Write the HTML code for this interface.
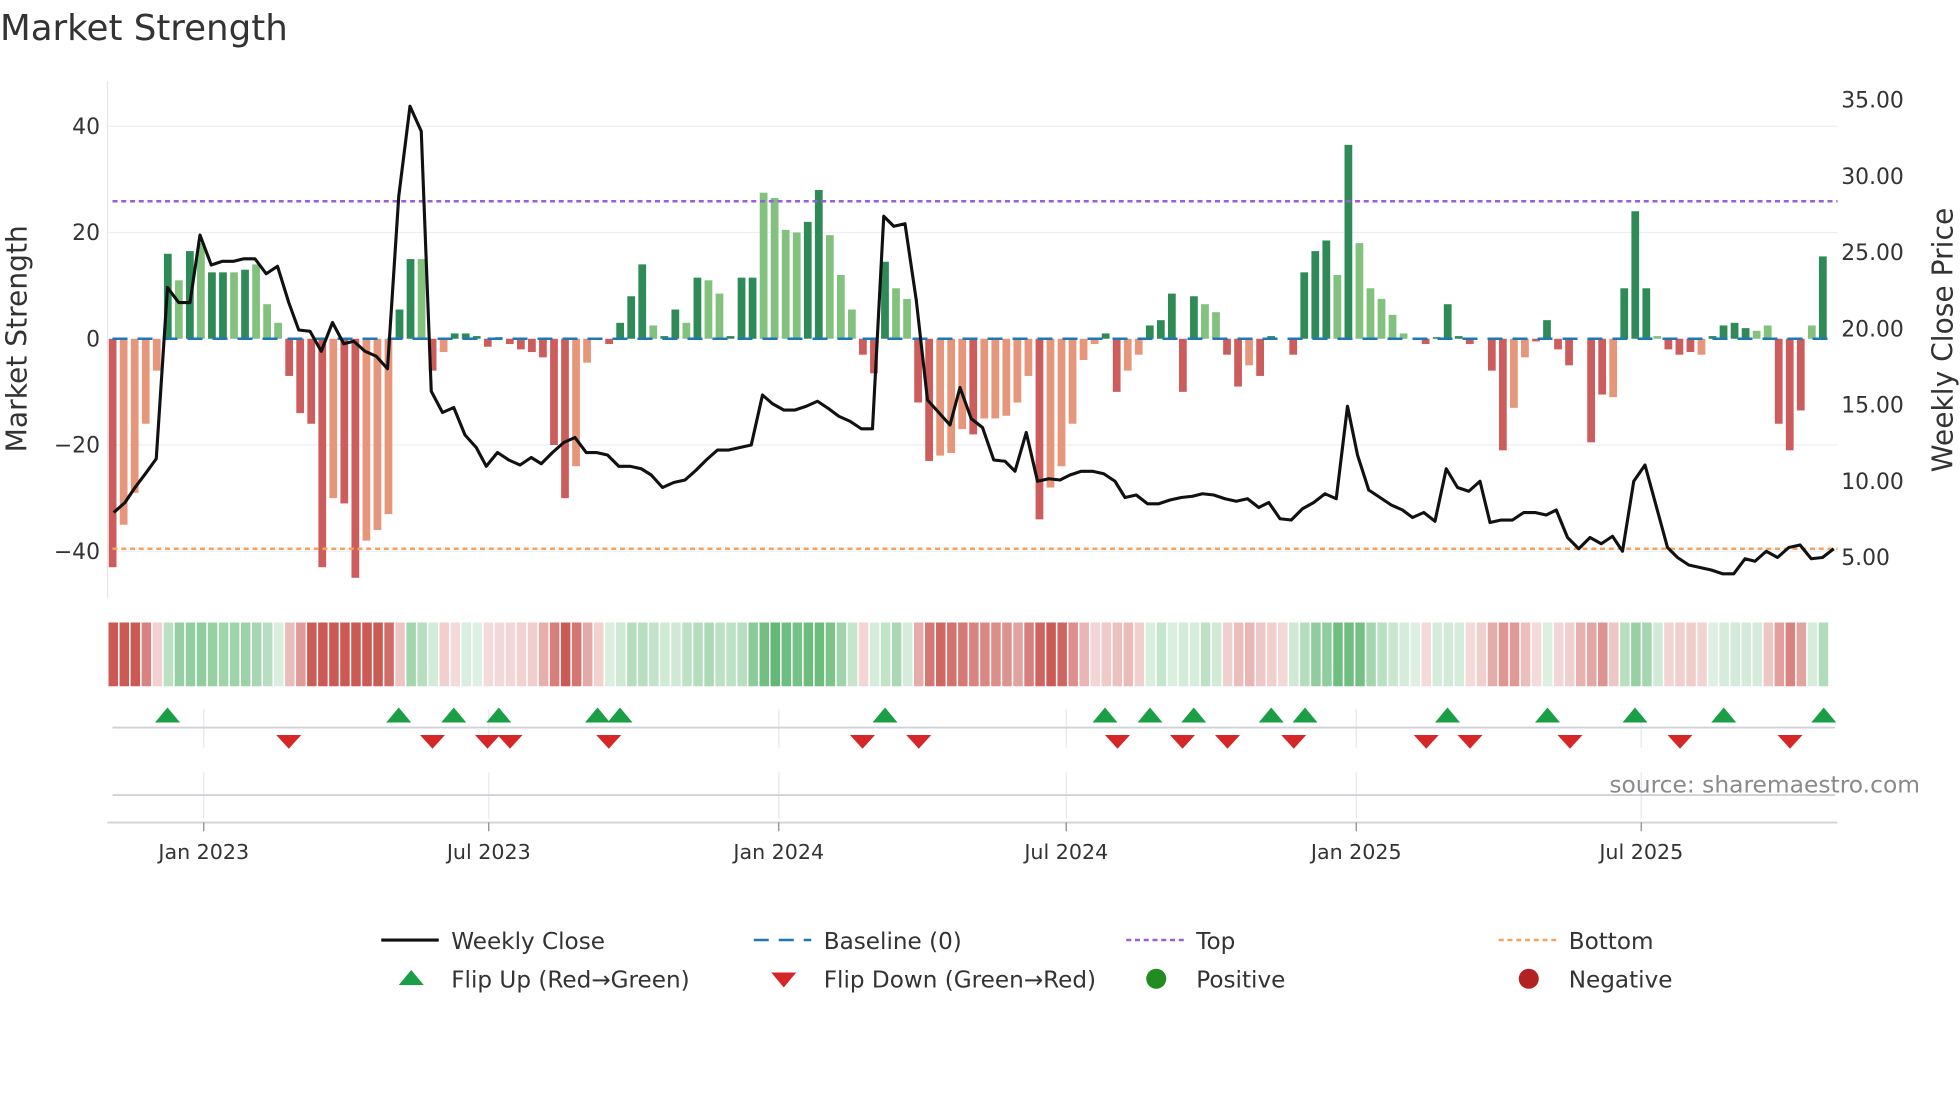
<!DOCTYPE html>
<html><head><meta charset="utf-8"><style>
html,body{margin:0;padding:0;background:#fff;}
svg{display:block;font-family:"DejaVu Sans","Liberation Sans",sans-serif;}
</style></head><body>
<svg id="s" width="1960" height="1102" viewBox="0 0 1568 881.6" xmlns="http://www.w3.org/2000/svg">
<rect width="1568" height="882" fill="#fff"/>
<text x="0" y="32" font-size="28.5" fill="#333">Market Strength</text>
<g id="grid" stroke="#eceff3" stroke-width="1">
<line x1="86" x2="1470" y1="101" y2="101"/><line x1="86" x2="1470" y1="186" y2="186"/>
<line x1="86" x2="1470" y1="356" y2="356"/><line x1="86" x2="1470" y1="441" y2="441"/>
</g>
<line x1="86" x2="86" y1="65" y2="478" stroke="#e3e6ea"/>
<g id="bars"></g>
<line x1="90" x2="1470" y1="271" y2="271" stroke="#1f77b4" stroke-width="2" stroke-dasharray="12,8"/>
<line x1="90" x2="1470" y1="161" y2="161" stroke="#9a5fd6" stroke-width="2" stroke-dasharray="4,3"/>
<line x1="90" x2="1470" y1="439" y2="439" stroke="#f4a460" stroke-width="2" stroke-dasharray="4,3"/>
<polyline id="pl" fill="none" stroke="#111" stroke-width="2.5" stroke-linejoin="round"/>
<g font-size="17.5" fill="#333" text-anchor="end">
<text x="80" y="107">40</text><text x="80" y="192">20</text><text x="80" y="277">0</text>
<text x="80" y="362">−20</text><text x="80" y="447">−40</text>
</g>
<g font-size="17.5" fill="#333">
<text x="1473" y="86">35.00</text><text x="1473" y="147">30.00</text><text x="1473" y="208">25.00</text>
<text x="1473" y="269">20.00</text><text x="1473" y="330">15.00</text><text x="1473" y="391">10.00</text><text x="1473" y="452">5.00</text>
</g>
<text transform="translate(21,271) rotate(-90)" font-size="22.5" fill="#333" text-anchor="middle">Market Strength</text>
<text transform="translate(1562,272) rotate(-90)" font-size="22.5" fill="#333" text-anchor="middle">Weekly Close Price</text>
<g id="strip"></g>
<g stroke="#e6e9ee">
<line x1="163" x2="163" y1="567" y2="598"/><line x1="391" x2="391" y1="567" y2="598"/><line x1="623" x2="623" y1="567" y2="598"/><line x1="853" x2="853" y1="567" y2="598"/><line x1="1085" x2="1085" y1="567" y2="598"/><line x1="1313" x2="1313" y1="567" y2="598"/>
<line x1="163" x2="163" y1="618" y2="655"/><line x1="391" x2="391" y1="618" y2="655"/><line x1="623" x2="623" y1="618" y2="655"/><line x1="853" x2="853" y1="618" y2="655"/><line x1="1085" x2="1085" y1="618" y2="655"/><line x1="1313" x2="1313" y1="618" y2="655"/>
</g>
<line x1="90" x2="1468" y1="582" y2="582" stroke="#cfd3d8" stroke-width="1.5"/>
<line x1="90" x2="1468" y1="636" y2="636" stroke="#cfd3d8" stroke-width="1.5"/>
<line x1="86" x2="1470" y1="658" y2="658" stroke="#cfd3d8" stroke-width="1.5"/>
<g stroke="#888"><line x1="163" x2="163" y1="658" y2="665"/><line x1="391" x2="391" y1="658" y2="665"/><line x1="623" x2="623" y1="658" y2="665"/><line x1="853" x2="853" y1="658" y2="665"/><line x1="1085" x2="1085" y1="658" y2="665"/><line x1="1313" x2="1313" y1="658" y2="665"/></g>
<g id="mk"></g>
<text x="1536" y="634" font-size="18.7" fill="#8a8a8a" text-anchor="end">source: sharemaestro.com</text>
<g font-size="16.5" fill="#333" text-anchor="middle">
<text x="163" y="687">Jan 2023</text><text x="391" y="687">Jul 2023</text><text x="623" y="687">Jan 2024</text>
<text x="853" y="687">Jul 2024</text><text x="1085" y="687">Jan 2025</text><text x="1313" y="687">Jul 2025</text>
</g>
<g font-size="18.5" fill="#333">
<line x1="305" x2="351" y1="752" y2="752" stroke="#111" stroke-width="2.5"/><text x="361" y="759">Weekly Close</text>
<line x1="603" x2="649" y1="752" y2="752" stroke="#1f77b4" stroke-width="2" stroke-dasharray="12,8"/><text x="659" y="759">Baseline (0)</text>
<line x1="901" x2="947" y1="752" y2="752" stroke="#9a5fd6" stroke-width="2" stroke-dasharray="4,3"/><text x="957" y="759">Top</text>
<line x1="1199" x2="1245" y1="752" y2="752" stroke="#f4a460" stroke-width="2" stroke-dasharray="4,3"/><text x="1255" y="759">Bottom</text>
<polygon points="319,788 339,788 329,776" fill="#1a9e46"/><text x="361" y="790">Flip Up (Red→Green)</text>
<polygon points="617,778 637,778 627,790" fill="#d62728"/><text x="659" y="790">Flip Down (Green→Red)</text>
<circle cx="925" cy="783" r="8" fill="#228b22"/><text x="957" y="790">Positive</text>
<circle cx="1223" cy="783" r="8" fill="#b22222"/><text x="1255" y="790">Negative</text>
</g>
</svg>
<script>
var v=[-43,-35,-29,-16,-6,16,11,16.5,18,12.5,12.5,12.5,13,14,6.5,3,-7,-14,-16,-43,-30,-31,-45,-38,-36,-33,5.5,15,15,-6,-2.5,1,1,0.5,-1.5,0.3,-1,-2,-2.5,-3.5,-20,-30,-24,-4.5,0,-1,3,8,14,2.5,0.5,5.5,3,11.5,11,8.5,0.5,11.5,11.5,27.5,26.5,20.5,20,22,28,19.5,12,5.5,-3,-6.5,14.5,9.5,7.5,-12,-23,-22,-21.5,-17,-18,-15,-15,-14.5,-12,-7,-34,-28,-24,-16,-4,-1,1,-10,-6,-3,2.5,3.5,8.5,-10,8,6.5,5,-3,-9,-5,-7,0.5,0,-3,12.5,16.5,18.5,12,36.5,18,9.5,7.5,4.5,1,0,-1,0.3,6.5,0.5,-1,0,-6,-21,-13,-3.5,-0.5,3.5,-2,-5,0,-19.5,-10.5,-11,9.5,24,9.5,0.5,-2,-3,-2.5,-3,0.5,2.5,3,2,1.5,2.5,-16,-21,-13.5,2.5,15.5];
var light={1:1,2:1,3:1,4:1,6:1,8:1,11:1,13:1,14:1,15:1,20:1,23:1,24:1,25:1,28:1,30:1,42:1,43:1,49:1,52:1,54:1,55:1,59:1,60:1,61:1,62:1,65:1,66:1,67:1,71:1,72:1,75:1,76:1,77:1,79:1,80:1,81:1,82:1,83:1,85:1,86:1,87:1,88:1,89:1,92:1,93:1,99:1,100:1,103:1,111:1,113:1,114:1,115:1,116:1,117:1,127:1,128:1,136:1,140:1,144:1,149:1,150:1,154:1};
var NS="http://www.w3.org/2000/svg";
function el(p,t,a){var e=document.createElementNS(NS,t);for(var k in a)e.setAttribute(k,a[k]);p.appendChild(e);return e;}
var bars=document.getElementById('bars'),strip=document.getElementById('strip');
var step=(1467-90)/156;
for(var i=0;i<v.length;i++){
 var x=90+i*step,val=v[i],y0=271,h=Math.abs(val)*4.25;
 var c=val>=0?(light[i]?'#82c17e':'#2e8a57'):(light[i]?'#e6967a':'#cd5c5c');
 el(bars,'rect',{x:x-3,y:val>=0?y0-h:y0,width:6.2,height:h,fill:c});
 var s=0,n=0;for(var j=Math.max(0,i-1);j<=Math.min(v.length-1,i+1);j++){s+=v[j];n++;}s/=n;
 var a=Math.min(1,Math.abs(s)/25)*0.75+0.2;
 var sc=s>=0?'rgba(90,180,110,'+a+')':'rgba(200,80,75,'+a+')';
 el(strip,'rect',{x:x-3.2,y:498,width:7.6,height:51,fill:sc});
}
var P=[[91,410],[100,402],[108,390],[117,378],[125,367],[134,230],[143,242],[152,242],[160,188],[169,212],[178,209],[187,209],[195,207],[204,207],[213,219],[222,213],[231,242],[239,264],[248,265],[257,281],[266,258],[275,275],[283,273],[292,281],[301,285],[310,295],[319,157],[328,85],[337,105],[345,313],[354,330],[363,326],[372,348],[381,358],[389,373],[398,362],[407,368],[416,372],[425,366],[433,371],[442,362],[451,354],[460,350],[469,362],[477,362],[486,364],[495,373],[504,373],[513,375],[521,380],[530,390],[539,386],[548,384],[557,376],[565,368],[574,360],[583,360],[592,358],[601,356],[610,316],[618,323],[627,328],[636,328],[645,325],[654,321],[663,327],[671,333],[680,337],[689,343],[698,343],[707,173],[715,181],[724,179],[733,240],[742,320],[751,330],[760,340],[768,310],[777,335],[786,342],[795,368],[804,369],[812,377],[821,346],[830,385],[839,383],[848,384],[856,380],[865,377],[874,377],[883,379],[892,385],[900,398],[909,396],[918,403],[927,403],[936,400],[945,398],[954,397],[962,395],[971,396],[980,399],[989,401],[998,399],[1007,406],[1015,402],[1024,415],[1033,416],[1042,407],[1051,402],[1060,395],[1069,399],[1078,325],[1086,364],[1095,392],[1104,398],[1113,404],[1122,408],[1130,414],[1139,410],[1148,417],[1157,375],[1166,390],[1175,393],[1184,385],[1192,418],[1201,416],[1210,416],[1219,410],[1228,410],[1237,412],[1245,408],[1254,430],[1263,439],[1272,430],[1281,435],[1290,429],[1298,441],[1307,385],[1316,372],[1325,405],[1334,438],[1342,446],[1351,452],[1360,454],[1369,456],[1378,459],[1387,459],[1396,447],[1404,449],[1413,441],[1422,446],[1431,438],[1440,436],[1449,447],[1458,446],[1467,439]];
document.getElementById('pl').setAttribute('points',P.map(function(p){return p.join(',');}).join(' '));
var mk=document.getElementById('mk');
[134,319,363,399,478,496,708,884,920,955,1017,1044,1158,1238,1308,1379,1459].forEach(function(x){el(mk,'polygon',{points:(x-10)+',578 '+(x+10)+',578 '+x+',566',fill:'#1a9e46'});});
[231,346,390,408,487,690,735,894,946,982,1035,1141,1176,1256,1344,1432].forEach(function(x){el(mk,'polygon',{points:(x-10)+',588 '+(x+10)+',588 '+x+',599',fill:'#d62728'});});
</script>
</body></html>
